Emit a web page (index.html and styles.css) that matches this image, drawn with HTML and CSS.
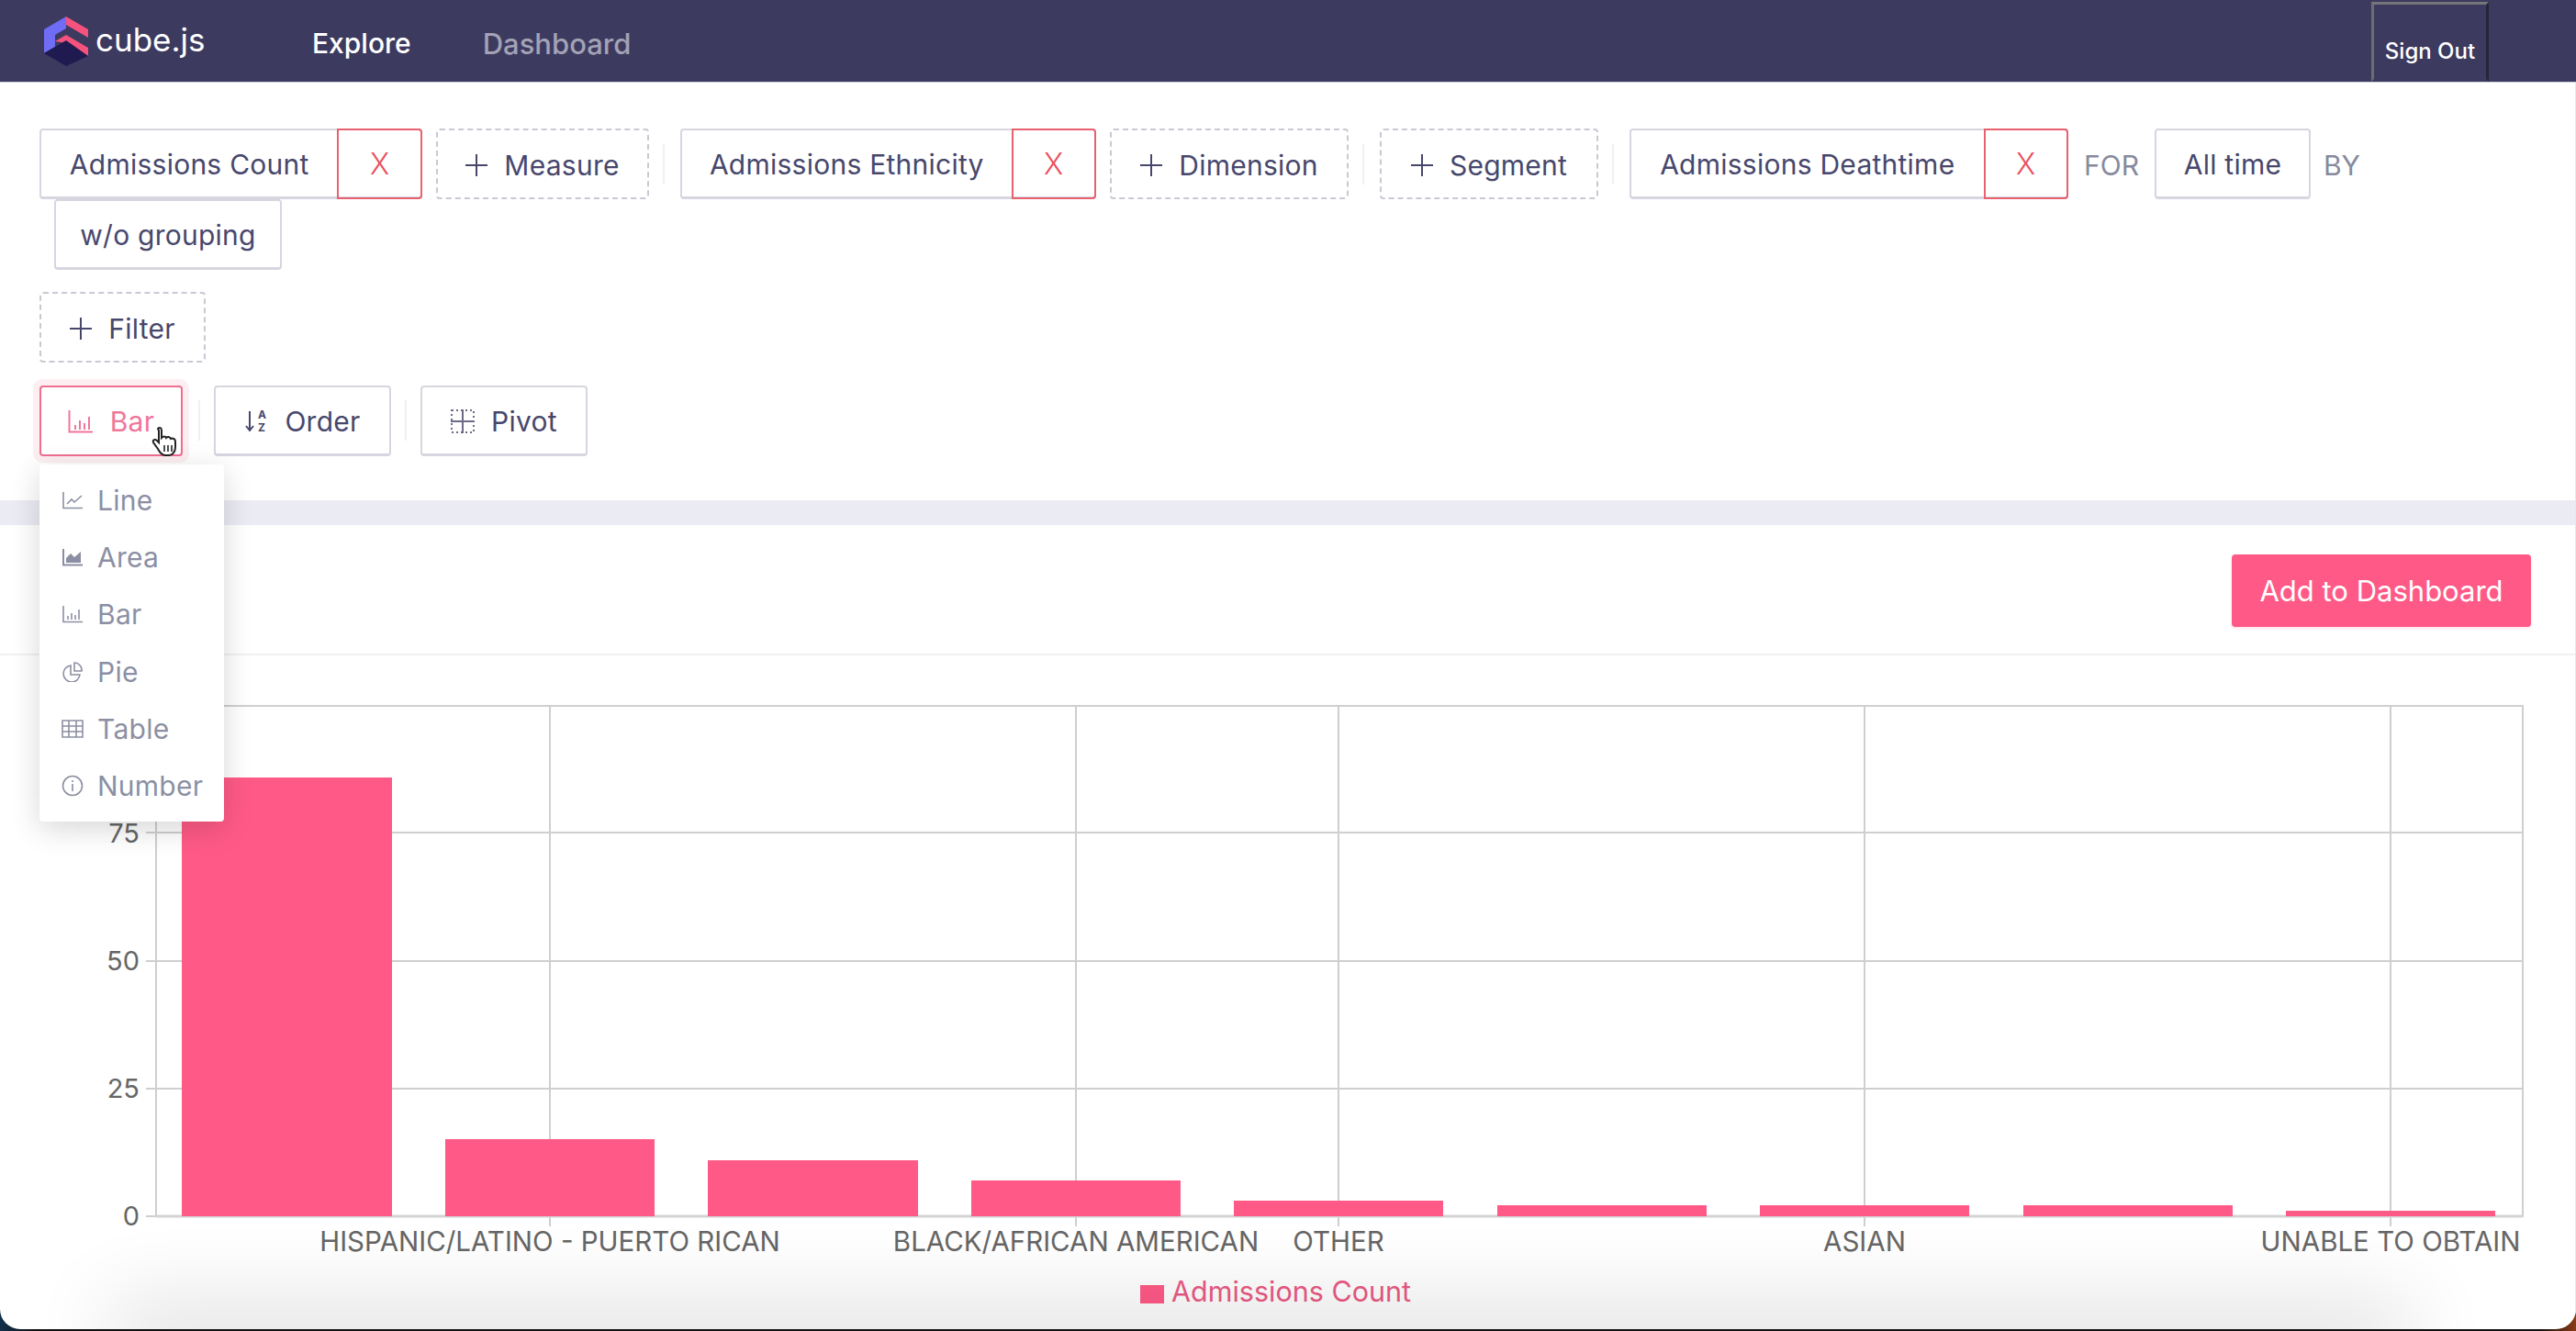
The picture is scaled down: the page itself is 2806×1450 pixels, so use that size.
FILE: index.html
```html
<!DOCTYPE html>
<html lang="en">
<head>
    <meta charset="UTF-8">
    <meta name="viewport" content="width=device-width, initial-scale=1.0">
    <title>cube.js Explore</title>
    <link rel="stylesheet" href="styles.css">
</head>
<body>
<div class="page">
    <!-- Top navigation -->
    <header class="topbar">
        <a class="logo">
            <svg class="logo-mark" viewBox="0 0 48 54" width="48" height="54">
                <path d="M24 0 L0 14 V40 L12 33 V20 L24 13 Z" fill="#6f6cf5"/>
                <path d="M24 0 L48 14 V23 L24 9 Z" fill="#f5527d"/>
                <path d="M12 27 L24 20 L48 34 V43 L24 29 Z" fill="#f5527d"/>
                <path d="M0 40 L24 26 L48 43 L24 54 Z" fill="#1f1a4f"/>
            </svg>
            <span class="logo-text">cube.js</span>
        </a>
        <nav class="nav">
            <a class="nav-item active">Explore</a>
            <a class="nav-item">Dashboard</a>
        </nav>
        <button class="sign-out">Sign Out</button>
    </header>

    <!-- Query builder -->
    <section class="builder">
        <div class="row row-members">
            <div class="member">
                <span class="member-name">Admissions Count</span>
                <span class="member-x">X</span>
            </div>
            <button class="btn dashed btn-measure"><span class="plus"></span>Measure</button>
            <span class="divider"></span>
            <div class="member">
                <span class="member-name">Admissions Ethnicity</span>
                <span class="member-x">X</span>
            </div>
            <button class="btn dashed btn-dimension"><span class="plus"></span>Dimension</button>
            <span class="divider"></span>
            <button class="btn dashed btn-segment"><span class="plus"></span>Segment</button>
            <span class="divider"></span>
            <div class="member">
                <span class="member-name">Admissions Deathtime</span>
                <span class="member-x">X</span>
            </div>
            <span class="word">FOR</span>
            <button class="btn btn-time">All time</button>
            <span class="word word-by">BY</span>
        </div>
        <div class="row row-group">
            <button class="btn btn-group">w/o grouping</button>
        </div>
        <div class="row row-filter">
            <button class="btn dashed btn-filter"><span class="plus"></span>Filter</button>
        </div>
        <div class="row row-options">
            <button class="btn btn-chart">
                <svg class="ico" viewBox="0 0 28 26" width="28" height="26">
                    <path d="M1.5 1 V24.5 H27 M8 22 V17 M13 22 V12 M18 22 V15 M23 22 V8" fill="none" stroke="currentColor" stroke-width="2"/>
                </svg>
                Bar
            </button>
            <span class="divider small"></span>
            <button class="btn btn-order">
                <svg class="ico" viewBox="0 0 26 26" width="26" height="26">
                    <path d="M6 2 V22 M2 18 L6 23 L10 18" fill="none" stroke="currentColor" stroke-width="2"/>
                    <text x="15" y="10" class="ico-letter">A</text>
                    <text x="15" y="24" class="ico-letter">Z</text>
                </svg>
                Order
            </button>
            <span class="divider small"></span>
            <button class="btn btn-pivot">
                <svg class="ico pivot-ico" viewBox="0 0 26 26" width="26" height="26">
                    <path d="M0 13 H26 M13 0 V26" fill="none" stroke="currentColor" stroke-width="2"/>
                    <path d="M1 1 H25 V25 H1 Z" fill="none" stroke="currentColor" stroke-width="2" stroke-dasharray="2 3"/>
                </svg>
                Pivot
            </button>
        </div>
    </section>

    <div class="band"></div>

    <!-- Chart card -->
    <section class="card">
        <div class="card-head">
            <button class="btn-add">Add to Dashboard</button>
        </div>
        <svg class="chart" viewBox="0 0 2806 736" width="2806" height="736">
            <g class="grid">
                <path d="M170 1 H2748 V558 M170 1 V558"/>
                <path d="M170 139 H2748 M170 279 H2748 M170 418 H2748"/>
                <path d="M599 1 V568 M1172 1 V568 M1458 1 V568 M2031 1 V568 M2604 1 V568"/>
                <path d="M159 139 H170 M159 279 H170 M159 418 H170 M159 557 H170"/>
                <path class="axis" d="M170 557 H2748"/>
            </g>
            <g class="bars">
                <rect x="198" y="79" width="229" height="478"/>
                <rect x="485" y="473" width="228" height="84"/>
                <rect x="771" y="496" width="229" height="61"/>
                <rect x="1058" y="518" width="228" height="39"/>
                <rect x="1344" y="540" width="228" height="17"/>
                <rect x="1631" y="545" width="228" height="12"/>
                <rect x="1917" y="545" width="228" height="12"/>
                <rect x="2204" y="545" width="228" height="12"/>
                <rect x="2490" y="551" width="228" height="6"/>
            </g>
            <g class="y-labels">
                <text x="152" y="150">75</text>
                <text x="152" y="289">50</text>
                <text x="152" y="428">25</text>
                <text x="152" y="567">0</text>
            </g>
            <g class="x-labels">
                <text x="599" y="595">HISPANIC/LATINO - PUERTO RICAN</text>
                <text x="1172" y="595">BLACK/AFRICAN AMERICAN</text>
                <text x="1458" y="595">OTHER</text>
                <text x="2031" y="595">ASIAN</text>
                <text x="2604" y="595">UNABLE TO OBTAIN</text>
            </g>
            <rect class="legend-mark" x="1242" y="632" width="26" height="20"/>
            <text class="legend-text" x="1276" y="650">Admissions Count</text>
        </svg>
    </section>

    <!-- Chart type menu, open over the page -->
    <ul class="menu">
        <li>
            <svg class="ico" viewBox="0 0 22 20" width="22" height="20"><path d="M1 1 V18.5 H22 M5 14 L10 9 L13 12 L21 5" fill="none" stroke="currentColor" stroke-width="1.6"/></svg>
            Line
        </li>
        <li>
            <svg class="ico" viewBox="0 0 22 20" width="22" height="20"><path d="M1 1 V18.5 H22" fill="none" stroke="currentColor" stroke-width="2"/><path d="M4 16 V11 L9 6 L13 10 L20 4 V16 Z" fill="currentColor"/></svg>
            Area
        </li>
        <li>
            <svg class="ico" viewBox="0 0 22 20" width="22" height="20"><path d="M1 1 V18.5 H22 M6 16 V12 M10 16 V9 M14 16 V11 M18 16 V5" fill="none" stroke="currentColor" stroke-width="1.6"/></svg>
            Bar
        </li>
        <li>
            <svg class="ico" viewBox="0 0 22 22" width="22" height="22"><path d="M9 4 A9 9 0 1 0 19 14 H9 Z M13 1 A8 8 0 0 1 21 10 H13 Z" fill="none" stroke="currentColor" stroke-width="1.6"/></svg>
            Pie
        </li>
        <li>
            <svg class="ico" viewBox="0 0 24 20" width="24" height="20"><path d="M1 1 H23 V19 H1 Z M1 7 H23 M1 13 H23 M8 1 V19 M16 1 V19" fill="none" stroke="currentColor" stroke-width="1.6"/></svg>
            Table
        </li>
        <li>
            <svg class="ico" viewBox="0 0 24 24" width="24" height="24"><circle cx="12" cy="12" r="10.5" fill="none" stroke="currentColor" stroke-width="1.6"/><path d="M12 10 V18 M12 6 V8" fill="none" stroke="currentColor" stroke-width="1.6"/></svg>
            Number
        </li>
    </ul>

    <!-- Mouse pointer from the recording -->
    <svg class="pointer" viewBox="0 0 30 34" width="30" height="34">
        <path d="M7 3 C9 1 11 2 11 5 V13 C13 11 15 11 16 13 C18 11 20 12 21 14 C23 13 26 14 26 17 V23 C26 28 23 32 19 32 H15 C11 32 9 29 7 25 L2 18 C1 15 4 14 6 16 L8 18 V5 Z" fill="#fff" stroke="#222" stroke-width="2"/>
        <path d="M14 21 V28 M18 21 V28 M22 21 V28" stroke="#222" stroke-width="1.6"/>
    </svg>

    <div class="bottom-shade"></div>
</div>
</body>
</html>
```

FILE: styles.css
```css
html, body {
    margin: 0;
    padding: 0;
    height: 100%;
    overflow: hidden;
}

body {
    background: linear-gradient(90deg, #12304a 0, #111 40px, #111 calc(100% - 40px), #8a3a14 100%);
    font-family: "Inter", "Liberation Sans", sans-serif;
    color: #43436b;
}

.page {
    position: relative;
    height: 1448px;
    background: #fff;
    border-radius: 0 0 22px 22px;
    overflow: hidden;
}

/* thin light edge on the right of the window */
.page::after {
    content: "";
    position: absolute;
    top: 90px;
    right: 0;
    bottom: 0;
    width: 1px;
    background: #e8e8ec;
}

button {
    font-family: inherit;
    cursor: pointer;
}

/* top bar */
.topbar {
    display: flex;
    align-items: center;
    height: 90px;
    padding-left: 48px;
    background: #3d3a5f;
    border-bottom: 1px solid #cfcfdc;
    box-sizing: border-box;
}

.logo {
    display: flex;
    align-items: center;
    width: 292px;
}

.logo-mark {
    margin-right: 8px;
}

.logo-text {
    font-size: 35px;
    color: #fff;
    margin-top: -4px;
}

.nav {
    display: flex;
    gap: 78px;
    flex: 1;
    padding-top: 5px;
}

.nav-item {
    font-size: 31px;
    font-weight: 500;
    color: #a3a2b6;
}

.nav-item.active {
    font-size: 30px;
    color: #fff;
}

.sign-out {
    align-self: flex-end;
    width: 128px;
    height: 87px;
    margin-right: 95px;
    padding: 20px 0 0;
    background: #3d3a5f;
    border: 3px solid;
    border-color: #76767a #26263a transparent #6c6c72;
    color: #fff;
    font-size: 24px;
    font-weight: 500;
}

/* query builder */
.builder {
    height: 455px;
    padding-top: 50px;
    box-sizing: border-box;
}

.row {
    display: flex;
    align-items: center;
    padding-left: 43px;
}

.row-members {
    height: 77px;
}

.row-group {
    height: 77px;
    padding-left: 59px;
}

.row-filter {
    height: 77px;
    margin-top: 24px;
}

.row-options {
    height: 78px;
    margin-top: 24px;
}

.btn {
    display: flex;
    align-items: center;
    justify-content: center;
    height: 77px;
    padding: 2px 0 0;
    background: #fff;
    border: 2px solid #d6d6e0;
    border-bottom-width: 3px;
    border-radius: 4px;
    color: #47476c;
    font-size: 30px;
    letter-spacing: 0.25px;
    font-weight: 400;
    white-space: nowrap;
    box-sizing: border-box;
}

.btn.dashed {
    border: 2px dashed #c9c9d4;
}

.plus {
    width: 24px;
    height: 24px;
    margin-right: 18px;
    background:
        linear-gradient(currentColor, currentColor) center / 100% 2px no-repeat,
        linear-gradient(currentColor, currentColor) center / 2px 100% no-repeat;
}

.member {
    display: flex;
    height: 77px;
    background: #fff;
    border: 2px solid #d6d6e0;
    border-bottom-width: 3px;
    border-radius: 4px;
    box-sizing: border-box;
    color: #47476c;
    font-size: 30px;
    letter-spacing: 0.25px;
}

.member-name {
    display: flex;
    align-items: center;
    justify-content: center;
    padding-top: 2px;
    box-sizing: border-box;
}

.member-x {
    display: flex;
    align-items: center;
    justify-content: center;
    width: 93px;
    margin: -2px -2px -3px 0;
    border: 2px solid #e8616e;
    border-radius: 0 4px 4px 0;
    box-sizing: border-box;
    color: #ea4f5e;
    font-size: 32px;
    font-weight: 300;
}

.member:nth-child(1) { width: 417px; margin-right: 15px; }
.member:nth-child(4) { width: 453px; margin-right: 15px; }
.member:nth-child(9) { width: 478px; }
.member:nth-child(1) .member-name { width: 324px; }
.member:nth-child(4) .member-name { width: 361px; }
.member:nth-child(9) .member-name { width: 386px; }

.divider {
    width: 2px;
    height: 44px;
    margin: 0 17px 0 15px;
    background: #f0f0f3;
}

.divider.small {
    margin: 0 15px;
}

.word {
    font-size: 30px;
    color: #868a9d;
    margin: 0 17px;
    padding-top: 2px;
}

.word-by {
    margin-left: 14px;
}

.btn-measure { width: 232px; }
.btn-dimension { width: 260px; }
.btn-segment { width: 238px; }
.btn-time { width: 170px; }
.btn-group { width: 248px; }
.btn-filter { width: 181px; }
.btn-order { width: 193px; }
.btn-pivot { width: 182px; }

.btn-chart {
    width: 156px;
    margin-right: 2px;
    border: 2px solid #ee6f8f;
    box-shadow: 0 0 0 7px #fdeef2;
    color: #f0769a;
}

.ico {
    flex-shrink: 0;
    margin-right: 18px;
}

.pivot-ico {
    color: #6b6b88;
}

.ico-letter {
    font-size: 12px;
    font-weight: 700;
    fill: currentColor;
}

.band {
    height: 27px;
    background: #ebebf4;
}

/* chart card */
.card-head {
    display: flex;
    justify-content: flex-end;
    align-items: center;
    height: 142px;
    padding-right: 49px;
    border-bottom: 2px solid #f1f1f4;
    box-sizing: border-box;
}

.btn-add {
    width: 326px;
    height: 79px;
    padding: 0;
    margin-top: 2px;
    background: #ff5a87;
    border: none;
    border-radius: 4px;
    box-shadow: 0 2px 3px rgba(255, 90, 135, 0.15);
    color: #fff;
    font-size: 31px;
}

.chart {
    display: block;
    margin-top: 54px;
}

.grid path {
    fill: none;
    stroke: #cfcfd2;
    stroke-width: 2;
}

.grid path.axis {
    stroke: #d4d4d6;
    stroke-width: 3;
}

.bars rect {
    fill: #ff5a87;
}

.y-labels text,
.x-labels text {
    font-size: 29.5px;
    fill: #666;
}

.y-labels text {
    text-anchor: end;
    font-size: 29px;
}

.x-labels text {
    text-anchor: middle;
}

.legend-mark {
    fill: #ff5a87;
}

.legend-text {
    font-size: 30.5px;
    fill: #ec5a84;
}

/* chart type menu */
.menu {
    position: absolute;
    top: 506px;
    left: 43px;
    width: 201px;
    height: 389px;
    margin: 0;
    padding: 8px 0 0;
    list-style: none;
    background: #fff;
    border-radius: 4px;
    box-shadow: 0 8px 32px rgba(0, 0, 0, 0.16);
    box-sizing: border-box;
    color: #8c8fa3;
    font-size: 30px;
    letter-spacing: 0.25px;
}

.menu li {
    display: flex;
    align-items: center;
    height: 62.2px;
    padding-left: 24px;
}

.menu .ico {
    width: 24px;
    margin-right: 15px;
}

.pointer {
    position: absolute;
    top: 464px;
    left: 165px;
}

.bottom-shade {
    position: absolute;
    left: 150px;
    right: 210px;
    bottom: -4px;
    height: 1px;
    box-shadow: 0 0 90px 30px rgba(0, 0, 0, 0.14);
}
```
